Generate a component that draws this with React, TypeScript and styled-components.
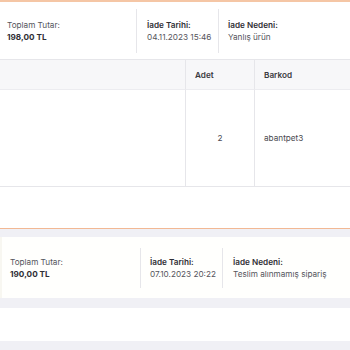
import styled, { createGlobalStyle } from "styled-components";

const GlobalStyle = createGlobalStyle`
  html, body {
    margin: 0;
    padding: 0;
    background: #f0f0f5;
    font-family: Inter, "Noto Sans", sans-serif;
    overflow: hidden;
  }
`;

const Page = styled.div`
  width: 350px;
  height: 350px;
  display: flex;
  flex-direction: column;
  overflow: hidden;
`;

interface CardProps {
  accent?: boolean;
}

const Card = styled.div<CardProps>`
  background: #ffffff;
  border-top: ${(p) => (p.accent ? "2px solid #f5c6a5" : "none")};
  border-bottom: ${(p) => (p.accent ? "1px solid #f2b894" : "none")};
  display: flex;
  flex-direction: column;
`;

const Gap = styled.div<{ h: number }>`
  height: ${(p) => p.h}px;
  flex-shrink: 0;
  background: #f0f0f5;
`;

const InfoRow = styled.div<{ h: number }>`
  height: ${(p) => p.h}px;
  display: flex;
  flex-direction: row;
  align-items: center;
`;

interface ColProps {
  w?: number;
  pl: number;
  divider?: boolean;
  span: number;
}

const InfoCol = styled.div<ColProps>`
  width: ${(p) => (p.w ? `${p.w}px` : "auto")};
  flex: ${(p) => (p.w ? "0 0 auto" : "1")};
  box-sizing: border-box;
  padding-left: ${(p) => p.pl}px;
  height: ${(p) => p.span}px;
  border-left: ${(p) => (p.divider ? "1px solid #e6e6ea" : "none")};
  display: flex;
  flex-direction: column;
  justify-content: center;
  gap: 2px;
`;

const Label = styled.div<{ strong?: boolean }>`
  font-size: 8.2px;
  line-height: 10px;
  color: ${(p) => (p.strong ? "#2f2f35" : "#55555c")};
  font-weight: ${(p) => (p.strong ? 600 : 400)};
`;

const Value = styled.div<{ strong?: boolean }>`
  font-size: 8.2px;
  line-height: 10px;
  color: ${(p) => (p.strong ? "#2f2f35" : "#55555c")};
  font-weight: ${(p) => (p.strong ? 700 : 400)};
`;

const Table = styled.div`
  display: grid;
  grid-template-columns: 185px 69px 1fr;
  border-top: 1px solid #e6e6ea;
`;

const HeadCell = styled.div<{ divider?: boolean }>`
  height: 30px;
  background: #f7f7f9;
  border-bottom: 1px solid #ececf0;
  border-left: ${(p) => (p.divider ? "1px solid #e6e6ea" : "none")};
  box-sizing: border-box;
  display: flex;
  align-items: center;
  padding-left: 9px;
  font-size: 8.2px;
  font-weight: 600;
  color: #3a3a40;
`;

const BodyCell = styled.div<{ divider?: boolean; center?: boolean }>`
  height: 97px;
  border-bottom: 1px solid #e6e6ea;
  border-left: ${(p) => (p.divider ? "1px solid #e6e6ea" : "none")};
  box-sizing: border-box;
  display: flex;
  align-items: center;
  justify-content: ${(p) => (p.center ? "center" : "flex-start")};
  padding-left: ${(p) => (p.center ? 0 : 9)}px;
  font-size: 8.2px;
  color: #4a4a50;
`;

const Spacer = styled.div`
  height: 41px;
`;

const Blank = styled.div<{ h: number }>`
  height: ${(p) => p.h}px;
  flex-shrink: 0;
  background: #ffffff;
`;

const SecondCard = styled.div`
  background: #fffffd;
  border-left: 2px solid #f8f7f1;
  flex-shrink: 0;
`;

function App() {
  return (
    <>
      <GlobalStyle />
      <Page>
        <Card accent>
          <InfoRow h={57}>
            <InfoCol w={136} pl={7} span={44}>
              <Label>Toplam Tutar:</Label>
              <Value strong>198,00 TL</Value>
            </InfoCol>
            <InfoCol w={82} pl={10} span={44} divider>
              <Label strong>İade Tarihi:</Label>
              <Value>04.11.2023 15:46</Value>
            </InfoCol>
            <InfoCol pl={9} span={44} divider>
              <Label strong>İade Nedeni:</Label>
              <Value>Yanlış ürün</Value>
            </InfoCol>
          </InfoRow>
          <Table>
            <HeadCell></HeadCell>
            <HeadCell divider>Adet</HeadCell>
            <HeadCell divider>Barkod</HeadCell>
            <BodyCell></BodyCell>
            <BodyCell divider center>2</BodyCell>
            <BodyCell divider>abantpet3</BodyCell>
          </Table>
          <Spacer />
        </Card>
        <Gap h={8} />
        <SecondCard>
          <InfoRow h={61}>
            <InfoCol w={138} pl={8} span={40}>
              <Label>Toplam Tutar:</Label>
              <Value strong>190,00 TL</Value>
            </InfoCol>
            <InfoCol w={82} pl={9} span={40} divider>
              <Label strong>İade Tarihi:</Label>
              <Value>07.10.2023 20:22</Value>
            </InfoCol>
            <InfoCol pl={10} span={40} divider>
              <Label strong>İade Nedeni:</Label>
              <Value>Teslim alınmamış sipariş</Value>
            </InfoCol>
          </InfoRow>
        </SecondCard>
        <Gap h={10} />
        <Blank h={33} />
        <Gap h={10} />
      </Page>
    </>
  );
}

export default App;
